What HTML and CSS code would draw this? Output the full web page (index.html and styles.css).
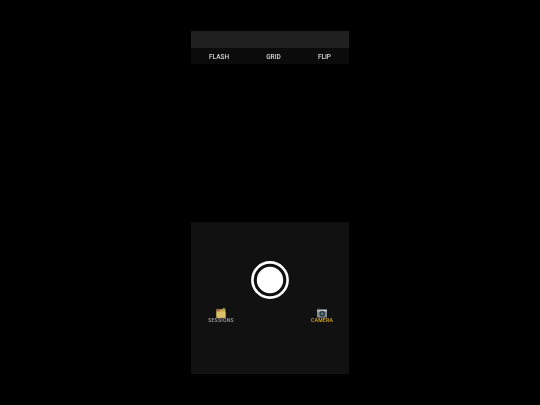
FILE: index.html
```html
<!DOCTYPE html>
<html lang="en">
<head>
<meta charset="utf-8">
<title>Camera</title>
<link rel="stylesheet" href="styles.css">
</head>
<body>
<main class="app">
  <header class="status"></header>
  <nav class="tools">
    <span class="tool">FLASH</span>
    <span class="tool">GRID</span>
    <span class="tool">FLIP</span>
  </nav>
  <section class="viewfinder"></section>
  <section class="panel">
    <div class="shutter-row">
      <button class="shutter" aria-label="Capture">
        <svg class="shutter-icon" viewBox="0 0 38 38" aria-hidden="true">
          <circle cx="19" cy="19" r="17.6" fill="none" stroke="#fff" stroke-width="2.6"/>
          <circle cx="19" cy="19" r="13.2" fill="#fff"/>
        </svg>
      </button>
    </div>
    <div class="tabs">
      <div class="tab">
        <svg class="tab-icon" viewBox="0 0 10 10" aria-hidden="true">
          <path d="M.5 1.2h9v8.6h-9z" fill="#c9a94f"/>
          <path d="M.5 1.2h3.6v2.4H.5z" fill="#a8694a"/>
          <path d="M6.6 0h2.4v2H6.6z" fill="#8f9a55"/>
          <path d="M.5 3.6h9v6.2h-9z" fill="#dcc06a"/>
        </svg>
        <span class="tab-label">SESSIONS</span>
      </div>
      <div class="tab tab-active">
        <svg class="tab-icon" viewBox="0 0 10 10" aria-hidden="true">
          <path d="M0 1.6h10v8H0z" fill="#7f8a8e"/>
          <path d="M0 1.6h10v1.8H0z" fill="#b9c0c3"/>
          <path d="M1 .5h2.4v1.2H1z" fill="#555"/>
          <circle cx="5.2" cy="5.8" r="2.8" fill="#2b3236"/>
          <circle cx="5.2" cy="5.8" r="1.5" fill="#4d7f8c"/>
        </svg>
        <span class="tab-label">CAMERA</span>
      </div>
    </div>
  </section>
</main>
</body>
</html>
```
FILE: styles.css
```css
* { box-sizing: border-box; }
html, body { margin: 0; height: 100%; background: #000; overflow: hidden; }
body { display: flex; justify-content: center; padding-top: 31px; font-family: Roboto, "Liberation Sans", sans-serif; }
.app { width: 158px; display: flex; flex-direction: column; }
.status { height: 17px; background: #202020; }
.tools { height: 16px; background: #0b0b0b; display: flex; justify-content: space-between; align-items: center; padding: 1px 18px 0; }
.tool { color: #dcdcdc; font-size: 6.5px; font-weight: 500; will-change: opacity; }
.viewfinder { height: 158px; background: #000; }
.panel { height: 152px; background: #111; display: flex; flex-direction: column; }
.shutter-row { display: flex; justify-content: center; padding-top: 39px; }
.shutter { width: 38px; height: 38px; padding: 0; border: 0; background: transparent; display: block; }
.shutter-icon { width: 38px; height: 38px; display: block; }
.tabs { display: flex; justify-content: space-between; padding: 9px 14px 0 17px; }
.tab { width: 26px; display: flex; flex-direction: column; align-items: center; color: #a0a0a0; }
.tab-active { color: #e4b31c; }
.tab-icon { width: 10px; height: 10px; display: block; }
.tab-label { font-size: 5px; line-height: 5px; font-weight: 500; letter-spacing: .3px; white-space: nowrap; will-change: opacity; }
```
